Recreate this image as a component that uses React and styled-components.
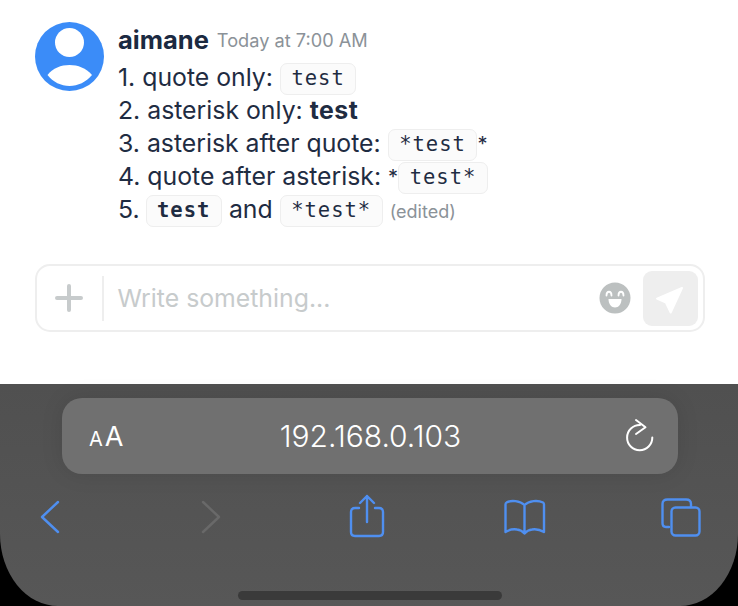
import styled, { createGlobalStyle } from 'styled-components';

const GlobalStyle = createGlobalStyle`
  html, body {
    margin: 0;
    padding: 0;
    background: #fff;
  }
`;

const Page = styled.div`
  width: 738px;
  height: 606px;
  display: flex;
  flex-direction: column;
  overflow: hidden;
  font-family: Inter, "Liberation Sans", sans-serif;
`;

const ChatArea = styled.div`
  height: 384px;
  box-sizing: border-box;
  padding: 22px 33px 0 35px;
  background: #fff;
  flex-shrink: 0;
`;

const Message = styled.div`
  display: flex;
  gap: 14px;
  height: 242px;
`;

const Avatar = styled.svg`
  width: 69px;
  height: 69px;
  flex-shrink: 0;
`;

const Body = styled.div`
  display: flex;
  flex-direction: column;
`;

const Meta = styled.div`
  display: flex;
  align-items: center;
  gap: 8px;
  height: 39px;
  padding-bottom: 4px;
  box-sizing: border-box;
  line-height: 34px;
`;

const Name = styled.span`
  font-size: 25.5px;
  font-weight: 700;
  color: #1b2a41;
`;

const Time = styled.span`
  font-size: 18.2px;
  color: #8b9298;
`;

const Line = styled.div`
  height: 33px;
  line-height: 33px;
  font-size: 24.8px;
  color: #1f2c42;
  white-space: nowrap;
`;

const Strong = styled.strong`
  font-weight: 700;
  letter-spacing: 0.5px;
`;

const Code = styled.code`
  display: inline-block;
  box-sizing: border-box;
  height: 32px;
  line-height: 29px;
  padding: 0 10.5px;
  margin: ${(p) => p.$margin || '0'};
  vertical-align: 1px;
  font-family: "DejaVu Sans Mono", "Liberation Mono", monospace;
  font-size: 20.5px;
  font-weight: ${(p) => (p.$bold ? 700 : 400)};
  letter-spacing: 1px;
  background: #fbfbfb;
  border: 1.5px solid #eeeeee;
  border-radius: 7px;
`;

const Asterisk = styled.span`
  font-size: 20px;
  vertical-align: 1px;
`;

const Edited = styled.span`
  margin-left: 7px;
  font-size: 18px;
  color: #8b9298;
`;

const InputBox = styled.div`
  display: flex;
  align-items: center;
  box-sizing: border-box;
  height: 68px;
  padding: 0 5px 0 18px;
  border: 2px solid #eeeeee;
  border-radius: 15px;
`;

const Plus = styled.svg`
  width: 28px;
  height: 28px;
  flex-shrink: 0;
`;

const Divider = styled.div`
  width: 1.5px;
  height: 45px;
  margin: 0 14px 0 19px;
  background: #eeeeee;
`;

const Placeholder = styled.div`
  flex: 1;
  font-size: 24.8px;
  color: #c7cbcc;
`;

const Emoji = styled.svg`
  width: 32px;
  height: 32px;
  margin-right: 12px;
`;

const SendButton = styled.div`
  width: 55px;
  height: 55px;
  border-radius: 9px;
  background: #eeeeee;
`;

const SendIcon = styled.svg`
  display: block;
  width: 55px;
  height: 55px;
`;

const Browser = styled.div`
  flex: 1;
  background: #000;
`;

const BrowserInner = styled.div`
  height: 100%;
  box-sizing: border-box;
  padding-top: 14px;
  display: flex;
  flex-direction: column;
  background: linear-gradient(#505050, #525252 30%, #575757);
  border-radius: 0 0 58px 58px / 0 0 72px 72px;
`;

const AddressBar = styled.div`
  height: 76px;
  margin: 0 60px 0 62px;
  padding: 0 23px 0 27px;
  display: grid;
  grid-template-columns: 60px 1fr 60px;
  align-items: center;
  background: #707070;
  border-radius: 20px;
  box-shadow: 0 0 22px rgba(0, 0, 0, 0.1);
  color: #fff;
`;

const TextSize = styled.div`
  display: flex;
  align-items: baseline;
  gap: 2px;
  margin-top: 3px;
  font-size: 27px;
  line-height: 30px;
`;

const SmallA = styled.span`
  font-size: 20px;
`;

const Url = styled.div`
  margin-left: -3px;
  text-align: center;
  font-size: 30px;
  font-weight: 300;
`;

const Reload = styled.svg`
  justify-self: end;
  width: 30px;
  height: 36px;
`;

const Toolbar = styled.div`
  display: grid;
  grid-template-columns: 161px 156px 157px 157px 40px;
  margin: 20px 0 0 30px;
  height: 46px;
  align-items: center;
`;

const ToolIcon = styled.svg`
  display: block;
  width: 40px;
  height: 46px;
  overflow: visible;
  fill: none;
  stroke: ${(p) => (p.$disabled ? '#696969' : '#4f8ff0')};
  stroke-width: 2.4px;
  stroke-linecap: round;
  stroke-linejoin: round;
`;

const HomeIndicator = styled.div`
  width: 264px;
  height: 9px;
  margin: 51px 0 0 238px;
  border-radius: 5px;
  background: #3a3a3a;
`;

export default function App() {
  return (
    <Page>
      <GlobalStyle />
      <ChatArea>
        <Message>
          <Avatar viewBox="0 0 69 69">
            <circle cx="34.5" cy="34.5" r="34.5" fill="#3b8cf8" />
            <circle cx="34.5" cy="20.5" r="14.5" fill="#fff" />
            <path d="M12.5 53C18 46 26 43 34.5 43S51 46 57 53C51 60 43 64 34.5 64S18 60 12.5 53Z" fill="#fff" />
          </Avatar>
          <Body>
            <Meta>
              <Name>aimane</Name>
              <Time>Today at 7:00 AM</Time>
            </Meta>
            <Line>1. quote only: <Code>test</Code></Line>
            <Line>2. asterisk only: <Strong>test</Strong></Line>
            <Line>3. asterisk after quote: <Code>*test</Code><Asterisk>*</Asterisk></Line>
            <Line>4. quote after asterisk: <Asterisk>*</Asterisk><Code>test*</Code></Line>
            <Line>5. <Code $bold $margin="0 0 0 -1px">test</Code> and <Code>*test*</Code><Edited>(edited)</Edited></Line>
          </Body>
        </Message>
        <InputBox>
          <Plus viewBox="0 0 28 28">
            <path d="M14 2V26M2 14H26" stroke="#c7cbcc" strokeWidth="4" strokeLinecap="round" />
          </Plus>
          <Divider />
          <Placeholder>Write something...</Placeholder>
          <Emoji viewBox="0 0 32 32">
            <circle cx="16" cy="16" r="15.5" fill="#bcc0c0" />
            <path d="M7.500 13.500C7.500 8.500 12.500 8.500 12.500 13.500M19.500 13.500C19.500 8.500 24.500 8.500 24.500 13.500" fill="none" stroke="#fff" strokeWidth="1.8" strokeLinecap="round" />
            <path d="M9.500 17H22.500C22.500 22 19.500 25.500 16 25.500S9.500 22 9.500 17Z" fill="#fff" />
          </Emoji>
          <SendButton>
            <SendIcon viewBox="0 0 55 55">
              <path d="M39 17L14 27.7L23 31.7L27.7 41.5Z" fill="#fff" stroke="#fff" strokeWidth="2" strokeLinejoin="round" />
            </SendIcon>
          </SendButton>
        </InputBox>
      </ChatArea>
      <Browser>
        <BrowserInner>
          <AddressBar>
            <TextSize><SmallA>A</SmallA>A</TextSize>
            <Url>192.168.0.103</Url>
            <Reload viewBox="0 0 30 36">
              <path d="M27.3 19.5A12.6 12.6 0 1 1 15 7M11 2L20.5 9.2L11 16" fill="none" stroke="#fff" strokeWidth="2" strokeLinecap="round" strokeLinejoin="round" />
            </Reload>
          </AddressBar>
          <Toolbar>
            <ToolIcon viewBox="0 0 40 46">
              <path d="M28 8L12 23L28 38" />
            </ToolIcon>
            <ToolIcon viewBox="0 0 40 46" $disabled>
              <path d="M12 8L28 23L12 38" />
            </ToolIcon>
            <ToolIcon viewBox="0 0 40 46">
              <path d="M12 14H8Q4 14 4 18V38Q4 42 8 42H32Q36 42 36 38V18Q36 14 32 14H28" />
              <path d="M20 2V28M13 9L20 2L27 9" />
            </ToolIcon>
            <ToolIcon viewBox="0 0 40 46">
              <path d="M20.500 11C16 6.500 7 6 2.500 8.500Q1.500 9 1.500 10.500V38Q7 34.500 13 35.500Q17.500 36 20.500 39.500Q23.500 36 28 35.500Q34 34.500 40 38V10.500Q40 9 39 8.500C34 6 25 6.500 20.500 11ZM20.500 11V39" />
            </ToolIcon>
            <ToolIcon viewBox="0 0 40 46">
              <path d="M8 33H5Q1.500 33 1.500 29V10Q1.500 5.500 6.500 5.500H25Q30 5.500 30 10V13" />
              <rect x="10.500" y="13.500" width="28" height="28" rx="4" />
            </ToolIcon>
          </Toolbar>
          <HomeIndicator />
        </BrowserInner>
      </Browser>
    </Page>
  );
}
